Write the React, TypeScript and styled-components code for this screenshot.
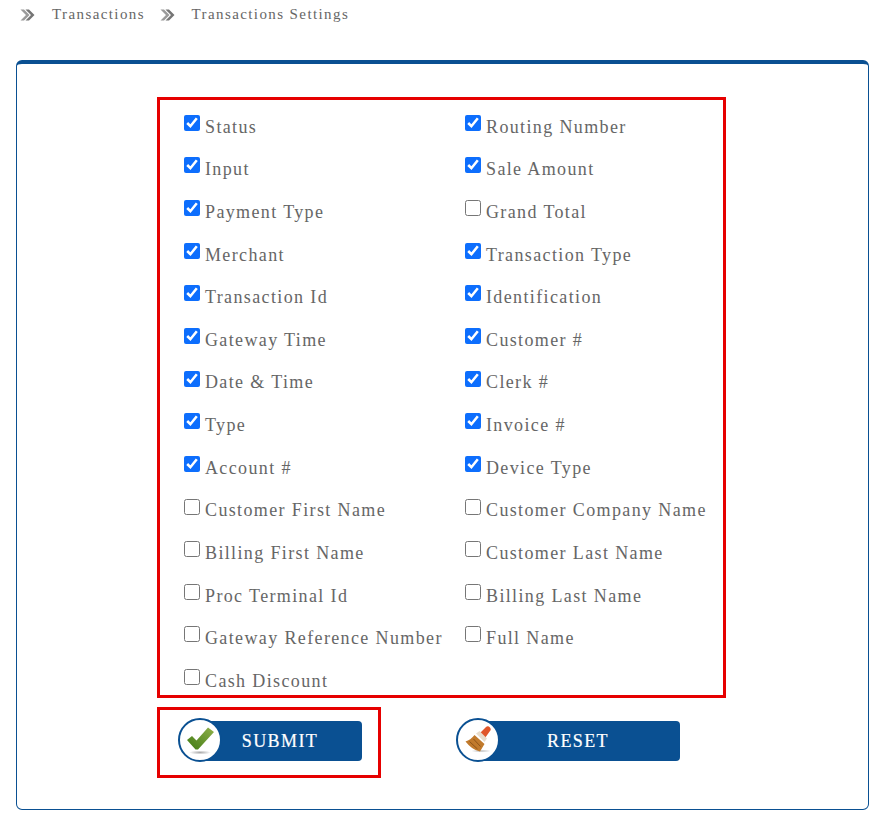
import React from 'react';
import styled, { createGlobalStyle } from 'styled-components';

const GlobalStyle = createGlobalStyle`
  html, body {
    margin: 0;
    padding: 0;
    background: #fff;
    font-family: "Liberation Serif", "Times New Roman", serif;
  }
`;

const Page = styled.div`
  width: 880px;
  height: 820px;
  overflow: hidden;
`;

const Breadcrumb = styled.nav`
  display: flex;
  align-items: center;
  height: 29px;
  padding-left: 20px;
  font-size: 15px;
  letter-spacing: 1.4px;
  color: #666;
`;

const Crumb = styled.span`
  margin-left: 17px;
  margin-right: 14.6px;
`;

const Card = styled.section`
  box-sizing: border-box;
  width: 853px;
  height: 750px;
  margin: 31px 0 0 16px;
  padding-top: 33px;
  border: 1px solid #0a5092;
  border-top-width: 4px;
  border-radius: 6px;
`;

const Outlined = styled.div`
  box-sizing: border-box;
  margin-left: 140px;
  border: 3px solid #e60000;
`;

const FieldBox = styled(Outlined)`
  width: 569px;
  height: 601px;
  padding: 6.8px 0 0 24px;
  display: grid;
  grid-template-columns: 281px 230px;
  grid-auto-rows: 42.65px;
`;

const FieldLabel = styled.label`
  display: flex;
  align-items: flex-start;
  font-size: 18px;
  line-height: 21px;
  letter-spacing: 1.37px;
  color: #666;
  white-space: nowrap;
`;

const FieldText = styled.span`
  margin-top: 9.8px;
`;

const Check = styled.input.attrs({ type: 'checkbox' })`
  width: 16px;
  height: 16px;
  margin: 8px 5px 0 0;
  flex: none;
  accent-color: #0d6efd;
`;

const ActionRow = styled.div`
  display: flex;
  align-items: flex-start;
  margin-top: 9px;
`;

const SubmitBox = styled(Outlined)`
  width: 224px;
  height: 71px;
  padding: 11px 0 0 38px;
`;

const ActionButton = styled.button`
  position: relative;
  display: block;
  box-sizing: border-box;
  width: 164px;
  height: 40px;
  padding: 0;
  border: 0;
  border-radius: 4px;
  background: #0a5092;
  color: #fff;
  font-family: inherit;
  font-size: 18px;
  letter-spacing: 1.4px;
  -webkit-text-stroke: 0.2px #fff;
`;

const ResetButton = styled(ActionButton)`
  width: 204px;
  margin: 14px 0 0 95px;
`;

const IconDisc = styled.span`
  position: absolute;
  left: -20px;
  top: -3px;
  box-sizing: border-box;
  width: 44px;
  height: 44px;
  border: 2px solid #0a5092;
  border-radius: 50%;
  background: #fff;
  display: flex;
  align-items: center;
  justify-content: center;

  svg {
    filter: blur(0.5px);
  }
`;

const CheckIcon = () => (
  <svg width="36" height="36" viewBox="0 0 36 36" aria-hidden="true">
    <defs>
      <linearGradient id="tick" x1="0" y1="1" x2="1" y2="0">
        <stop offset="0" stopColor="#3f7a12" />
        <stop offset="1" stopColor="#8fb04a" />
      </linearGradient>
      <radialGradient id="tickShadow">
        <stop offset="0" stopColor="#aaa" />
        <stop offset="1" stopColor="#fff" />
      </radialGradient>
    </defs>
    <ellipse cx="18" cy="30.5" rx="11" ry="2" fill="url(#tickShadow)" />
    <path d="M5 18 L10 14 L14.5 18.5 L26 5.5 L32 10 L16 27.5 L13.5 27.5 Z" fill="url(#tick)" />
  </svg>
);

const BrushIcon = () => (
  <svg width="36" height="36" viewBox="0 0 36 36" aria-hidden="true">
    <defs>
      <radialGradient id="brushShadow">
        <stop offset="0" stopColor="#bbb" />
        <stop offset="1" stopColor="#fff" />
      </radialGradient>
    </defs>
    <ellipse cx="21" cy="29" rx="10" ry="1.6" fill="url(#brushShadow)" />
    <path d="M20 11 L26 5 Q28 3.5 30 5.5 Q31.5 7.5 30 9 L25 16 Z" fill="#e0562a" />
    <path d="M16 11.5 L19.5 9 L27 16.5 L24.5 20 Z" fill="#e8dccb" />
    <path d="M14.5 13 L24.5 22 L20 29.5 Q12 28 5.5 19.5 Q10.5 18 14.5 13 Z" fill="#c17a2c" />
    <path d="M9.5 19.5 L17.5 27 M13.5 17 L20.5 24.5" stroke="#8f5418" strokeWidth="1" fill="none" />
  </svg>
);

const leftFields: [string, boolean][] = [
  ['Status', true],
  ['Input', true],
  ['Payment Type', true],
  ['Merchant', true],
  ['Transaction Id', true],
  ['Gateway Time', true],
  ['Date & Time', true],
  ['Type', true],
  ['Account #', true],
  ['Customer First Name', false],
  ['Billing First Name', false],
  ['Proc Terminal Id', false],
  ['Gateway Reference Number', false],
  ['Cash Discount', false],
];

const rightFields: [string, boolean][] = [
  ['Routing Number', true],
  ['Sale Amount', true],
  ['Grand Total', false],
  ['Transaction Type', true],
  ['Identification', true],
  ['Customer #', true],
  ['Clerk #', true],
  ['Invoice #', true],
  ['Device Type', true],
  ['Customer Company Name', false],
  ['Customer Last Name', false],
  ['Billing Last Name', false],
  ['Full Name', false],
];

const Chevrons = () => (
  <svg width="15" height="12" viewBox="0 0 15 12" aria-hidden="true">
    <path d="M0.5 0.5 L6 6 L0.5 11.5 L4 11.5 L9.5 6 L4 0.5 Z" fill="#9a9a9a" />
    <path d="M5.5 0.5 L11 6 L5.5 11.5 L9 11.5 L14.5 6 L9 0.5 Z" fill="#757575" />
  </svg>
);

const App = () => {
  const fields = leftFields.flatMap((f, i) => (rightFields[i] ? [f, rightFields[i]] : [f]));

  return (
    <Page>
      <GlobalStyle />
      <Breadcrumb>
        <Chevrons />
        <Crumb>Transactions</Crumb>
        <Chevrons />
        <Crumb>Transactions Settings</Crumb>
      </Breadcrumb>
      <Card>
        <FieldBox>
          {fields.map(([name, checked]) => (
            <FieldLabel key={name}>
              <Check defaultChecked={checked} />
              <FieldText>{name}</FieldText>
            </FieldLabel>
          ))}
        </FieldBox>
        <ActionRow>
          <SubmitBox>
            <ActionButton type="button">
              <IconDisc><CheckIcon /></IconDisc>
              SUBMIT
            </ActionButton>
          </SubmitBox>
          <ResetButton type="button">
            <IconDisc><BrushIcon /></IconDisc>
            RESET
          </ResetButton>
        </ActionRow>
      </Card>
    </Page>
  );
};

export default App;
